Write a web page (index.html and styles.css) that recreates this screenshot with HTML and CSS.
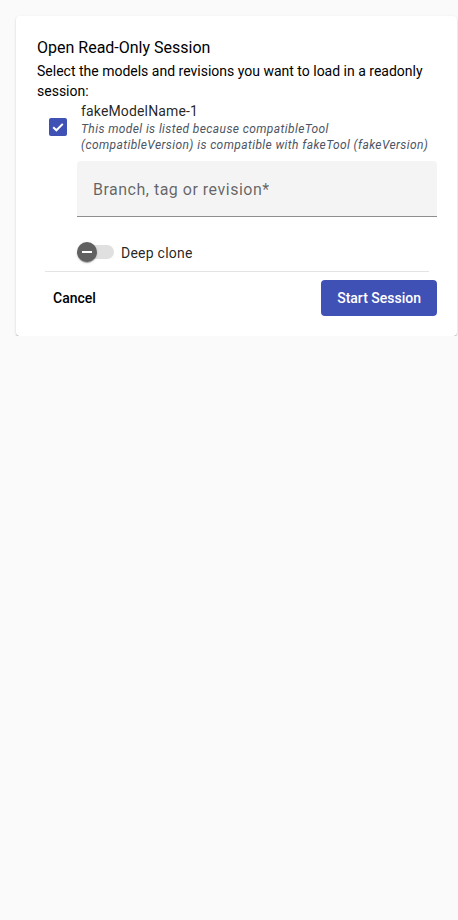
FILE: index.html
```html
<!DOCTYPE html>
<html lang="en">
<head>
<meta charset="utf-8">
<title>Open Read-Only Session</title>
<link rel="stylesheet" href="styles.css">
</head>
<body>
<div class="card">
  <h2 class="title">Open Read-Only Session</h2>
  <p class="desc">Select the models and revisions you want to load in a readonly session:</p>
  <div class="model">
    <div class="check-col">
      <span class="checkbox">
        <svg width="18" height="18" viewBox="0 0 18 18"><path d="M4.2 9.2 L7.4 12.3 L13.8 5.9" fill="none" stroke="#fff" stroke-width="2"/></svg>
      </span>
    </div>
    <div class="model-body">
      <div class="name">fakeModelName-1</div>
      <div class="hint">This model is listed because compatibleTool (compatibleVersion) is compatible with fakeTool (fakeVersion)</div>
    </div>
  </div>
  <div class="indent">
    <div class="field"><span class="placeholder">Branch, tag or revision*</span></div>
    <div class="toggle-row">
      <span class="toggle"><span class="track"></span><span class="thumb"><span class="minus"></span></span></span>
      <span class="toggle-label">Deep clone</span>
    </div>
  </div>
  <div class="divider"></div>
  <div class="actions">
    <button class="btn btn-text">Cancel</button>
    <button class="btn btn-primary">Start Session</button>
  </div>
</div>
</body>
</html>
```

FILE: styles.css
```css
* { box-sizing: border-box; }
html, body { margin: 0; padding: 0; }
body {
  background: #fafafa;
  font-family: Roboto, "Liberation Sans", sans-serif;
  color: rgba(0,0,0,0.87);
  padding: 16px 1px 0 16px;
}
.card {
  background: #fff;
  width: 441px;
  border-radius: 4px;
  padding: 20px 20px 20px 21px;
  box-shadow: 0 2px 1px -1px rgba(0,0,0,0.2), 0 1px 1px 0 rgba(0,0,0,0.14), 0 1px 3px 0 rgba(0,0,0,0.12);
}
.title {
  margin: 0;
  font-size: 16px;
  font-weight: 400;
  line-height: 24px;
  color: #000;
}
.desc {
  margin: 2px 0 0;
  font-size: 14px;
  line-height: 19.5px;
  color: #000;
}
.model {
  display: flex;
  align-items: center;
}
.check-col {
  width: 40px;
  flex: none;
  display: flex;
  justify-content: center;
  padding-left: 1px;
}
.checkbox {
  width: 18px;
  height: 18px;
  background: #3f51b5;
  border-radius: 2px;
  display: block;
}
.checkbox svg { display: block; }
.model-body { padding-left: 4px; }
.name {
  font-size: 14px;
  line-height: 20px;
  letter-spacing: 0.15px;
  color: rgba(0,0,0,0.87);
}
.hint {
  font-size: 12px;
  line-height: 16px;
  font-style: italic;
  letter-spacing: 0.4px;
  color: #4b5563;
}
.indent { margin-left: 40px; }
.field {
  margin-top: 8px;
  height: 56px;
  background: #f4f4f4;
  border-radius: 4px 4px 0 0;
  border-bottom: 1px solid rgba(0,0,0,0.42);
  padding: 0 16px;
  display: flex;
  align-items: center;
}
.placeholder {
  font-size: 16px;
  letter-spacing: 0.5px;
  color: rgba(0,0,0,0.6);
  padding-top: 1px;
}
.toggle-row {
  margin-top: 23px;
  height: 24px;
  display: flex;
  align-items: center;
}
.toggle {
  position: relative;
  width: 37px;
  height: 20px;
  flex: none;
  display: flex;
  align-items: center;
}
.track {
  margin-left: 3px;
  width: 34px;
  height: 14px;
  border-radius: 7px;
  background: #e0e0e0;
}
.thumb {
  position: absolute;
  left: 0;
  top: 0;
  width: 20px;
  height: 20px;
  border-radius: 50%;
  background: #616161;
  box-shadow: 0 2px 1px -1px rgba(0,0,0,0.2), 0 1px 1px 0 rgba(0,0,0,0.14), 0 1px 3px 0 rgba(0,0,0,0.12);
  display: flex;
  align-items: center;
  justify-content: center;
}
.minus {
  width: 10px;
  height: 2px;
  background: #fff;
}
.toggle-label {
  margin-left: 7px;
  font-size: 14px;
  letter-spacing: 0.25px;
  color: rgba(0,0,0,0.87);
  padding-top: 1px;
}
.divider {
  margin: 7px 8px 0;
  height: 1px;
  background: #e4e4e4;
}
.actions {
  margin-top: 8px;
  display: flex;
  justify-content: space-between;
}
.btn {
  height: 36px;
  padding: 0 16px;
  border: none;
  border-radius: 4px;
  font-family: Roboto, "Liberation Sans", sans-serif;
  font-size: 14px;
  font-weight: 500;
  background: transparent;
}
.btn-text { color: #000; }
.btn-primary {
  background: #3f51b5;
  color: #fff;
}
```
